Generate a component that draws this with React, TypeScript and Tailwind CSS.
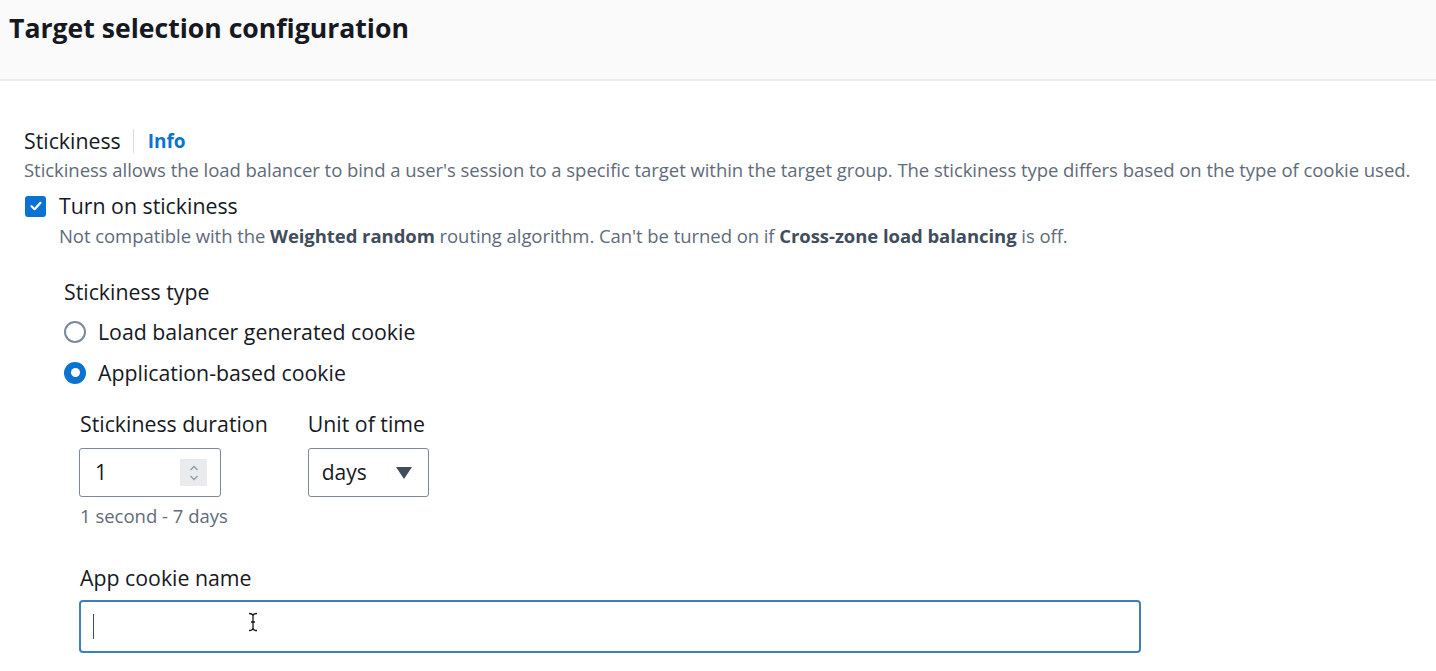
import React from "react";

const font = { fontFamily: '"Open Sans", "Noto Sans", Arial, sans-serif' };

function Radio({ checked, label }: { checked?: boolean; label: string }) {
  return (
    <div className="flex items-center gap-3 h-[41px]">
      {checked ? (
        <span className="w-[22px] h-[22px] rounded-full bg-[#0972d3] flex items-center justify-center">
          <span className="w-[9px] h-[9px] rounded-full bg-white" />
        </span>
      ) : (
        <span className="w-[22px] h-[22px] rounded-full border-2 border-[#7d8998] bg-white" />
      )}
      <span className="text-[21.3px] text-[#16191f]">{label}</span>
    </div>
  );
}

export default function App() {
  return (
    <div className="w-[1436px] h-[671px] bg-white overflow-hidden text-[#16191f]" style={font}>
      {/* header */}
      <div className="h-[81px] bg-[#fafafa] border-b-2 border-[#eaeded] px-[9px] pt-[9px]">
        <h2 className="text-[26.6px] font-bold leading-[38px] text-[#16191f]">Target selection configuration</h2>
      </div>

      <div className="pl-[24px] pt-[45px]">
        {/* stickiness label */}
        <div className="flex items-center h-[30px]">
          <span className="text-[21.3px]">Stickiness</span>
          <span className="ml-[12px] mr-[14px] w-px h-[24px] bg-[#d5dbdb]" />
          <span className="text-[19px] font-bold text-[#0972d3]">Info</span>
        </div>
        <p className="text-[18.5px] text-[#5f6b7a] leading-[28px] tracking-[-0.05px]">
          Stickiness allows the load balancer to bind a user's session to a specific target within the target group. The stickiness type differs based on the type of cookie used.
        </p>

        {/* checkbox */}
        <div className="flex items-center gap-[13px] mt-[6px] h-[32px]">
          <span className="w-[21px] h-[21px] rounded-[3px] bg-[#0972d3] flex items-center justify-center ml-[1px]">
            <svg width="14" height="14" viewBox="0 0 14 14" fill="none">
              <path d="M2.5 7.2 L5.6 10.2 L11.5 3.8" stroke="white" strokeWidth="2.2" strokeLinecap="round" strokeLinejoin="round" />
            </svg>
          </span>
          <span className="text-[21.3px]">Turn on stickiness</span>
        </div>
        <p className="pl-[35px] text-[18.5px] text-[#5f6b7a] leading-[28px] tracking-[-0.06px]">
          Not compatible with the <b className="text-[#414d5c]">Weighted random</b> routing algorithm. Can't be turned on if <b className="text-[#414d5c]">Cross-zone load balancing</b> is off.
        </p>

        {/* stickiness type */}
        <div className="pl-[40px] mt-[27px]">
          <div className="text-[21.3px] leading-[30px]">Stickiness type</div>
          <div className="mt-[4px]">
            <Radio label="Load balancer generated cookie" />
            <Radio checked label="Application-based cookie" />
          </div>

          <div className="pl-[16px] mt-[16px]">
            <div className="flex gap-[40px]">
              <div>
                <div className="text-[21.3px] leading-[30px] mb-[9px]">Stickiness duration</div>
                <div className="-ml-px w-[142px] h-[49px] border border-[#7d8998] rounded-[3px] flex items-center justify-between pl-[15px] pr-[13px]">
                  <span className="text-[21px]">1</span>
                  <span className="w-[27px] h-[27px] bg-[#e9ebed] flex flex-col items-center justify-center">
                    <svg width="10" height="18" viewBox="0 0 10 18" fill="none">
                      <path d="M1.5 6 L5 2.5 L8.5 6" stroke="#8d99a8" strokeWidth="1.3" />
                      <path d="M1.5 12 L5 15.5 L8.5 12" stroke="#8d99a8" strokeWidth="1.3" />
                    </svg>
                  </span>
                </div>
                <div className="text-[18.5px] text-[#5f6b7a] leading-[26px] mt-[6px]">1 second - 7 days</div>
              </div>
              <div>
                <div className="text-[21.3px] leading-[30px] mb-[9px]">Unit of time</div>
                <div className="w-[121px] h-[49px] border border-[#7d8998] rounded-[3px] flex items-center justify-between pl-[13px] pr-[16px]">
                  <span className="text-[21px]">days</span>
                  <svg width="16" height="12" viewBox="0 0 16 12">
                    <path d="M0 0 H16 L8 12 Z" fill="#414d5c" />
                  </svg>
                </div>
              </div>
            </div>

            <div className="mt-[34px]">
              <div className="text-[21.3px] leading-[30px] mb-[7px]">App cookie name</div>
              <div className="-ml-px relative w-[1062px] h-[53px] border-2 border-[#3d7fb8] rounded-[4px] flex items-center pl-[12px]">
                <span className="w-px h-[25px] bg-[#414d5c]" />
                <svg className="absolute left-[167px] top-[10px]" width="10" height="20" viewBox="0 0 10 20" fill="none">
                  <path d="M1 1.5 Q5 1.5 5 4 V16 Q5 18.5 1 18.5 M9 1.5 Q5 1.5 5 4 M5 16 Q5 18.5 9 18.5 M3 10 H7" stroke="#16191f" strokeWidth="1.3" />
                </svg>
              </div>
            </div>
          </div>
        </div>
      </div>
    </div>
  );
}
